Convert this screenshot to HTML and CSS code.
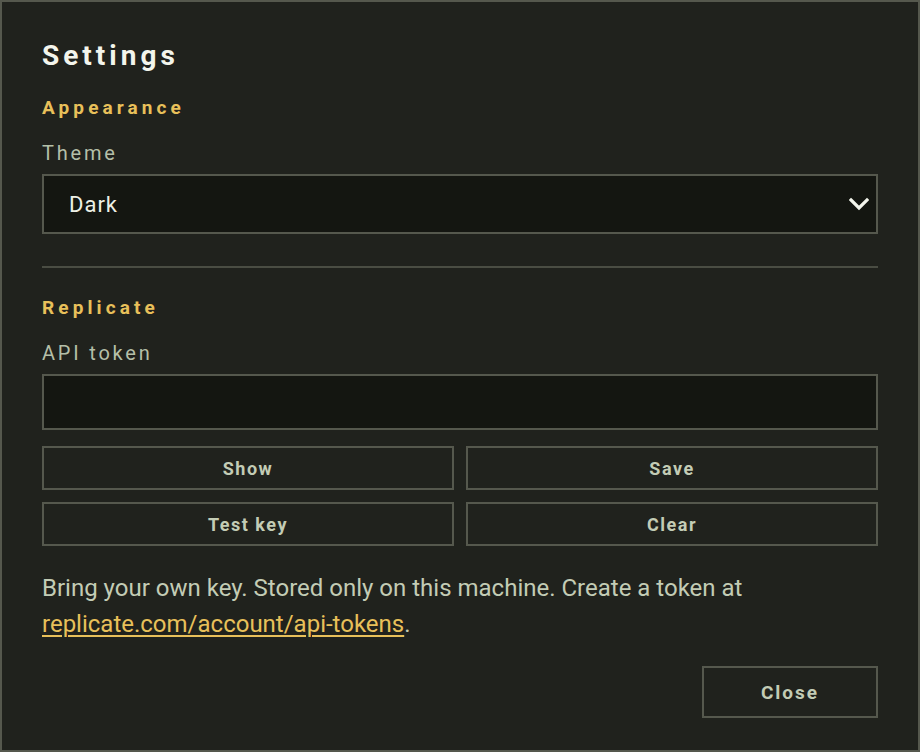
FILE: index.html
```html
<!DOCTYPE html>
<html>
<head>
<meta charset="utf-8">
<link rel="stylesheet" href="styles.css">
</head>
<body>
<div class="dialog">
  <h1 class="title">Settings</h1>
  <h2 class="section">Appearance</h2>
  <div class="label">Theme</div>
  <div class="select">
    <span class="select-value">Dark</span>
    <svg class="chevron" width="20" height="14" viewBox="0 0 20 14"><path d="M2 3 L10 11 L18 3" fill="none" stroke="#f3f5ec" stroke-width="3.2" stroke-linecap="square"/></svg>
  </div>
  <div class="divider"></div>
  <h2 class="section">Replicate</h2>
  <div class="label">API token</div>
  <div class="input"></div>
  <div class="btn-grid">
    <button class="btn">Show</button>
    <button class="btn">Save</button>
    <button class="btn">Test key</button>
    <button class="btn">Clear</button>
  </div>
  <p class="help">Bring your own key. Stored only on this machine. Create a token at <a class="link" href="#">replicate.com/account/api-tokens</a>.</p>
  <div class="footer">
    <button class="btn close">Close</button>
  </div>
</div>
</body>
</html>
```

FILE: styles.css
```css
html, body {
  margin: 0;
  padding: 0;
  background: #20221d;
}
.dialog {
  box-sizing: border-box;
  width: 920px;
  height: 752px;
  border: 2px solid #55584d;
  background: #20221d;
  padding: 38px 40px 0 40px;
  font-family: Roboto, "Liberation Sans", sans-serif;
  color: #c3ccb5;
}
.title {
  margin: 0;
  font-size: 28px;
  line-height: 32px;
  font-weight: 700;
  letter-spacing: 4px;
  color: #f3f5ec;
}
.section {
  margin: 24px 0 0 0;
  font-size: 19px;
  line-height: 24px;
  font-weight: 700;
  letter-spacing: 4.1px;
  color: #e8c05a;
}
.label {
  margin-top: 21px;
  font-size: 20px;
  line-height: 24px;
  letter-spacing: 2.8px;
  color: #b4bfa8;
}
.select {
  box-sizing: border-box;
  margin-top: 9px;
  height: 60px;
  border: 2px solid #55584d;
  background: #141611;
  display: flex;
  align-items: center;
  justify-content: space-between;
  padding: 0 7px 0 25px;
}
.select-value {
  font-size: 22px;
  letter-spacing: 1px;
  color: #eef0e6;
}
.chevron {
  display: block;
}
.divider {
  margin-top: 32px;
  border-top: 2px solid #4a4d43;
}
.divider + .section {
  margin-top: 28px;
}
.input {
  box-sizing: border-box;
  margin-top: 9px;
  height: 56px;
  border: 2px solid #55584d;
  background: #141611;
}
.btn-grid {
  margin-top: 16px;
  display: grid;
  grid-template-columns: 1fr 1fr;
  grid-auto-rows: 44px;
  gap: 12px;
}
.btn {
  box-sizing: border-box;
  margin: 0;
  border: 2px solid #55584d;
  background: #20221d;
  color: #c3ccb5;
  font-family: Roboto, "Liberation Sans", sans-serif;
  font-size: 18px;
  font-weight: 700;
  letter-spacing: 1.5px;
  padding: 0;
}
.help {
  margin: 24px 0 0 0;
  font-size: 24px;
  line-height: 36px;
  color: #c3ccb5;
}
.link {
  color: #e8c05a;
  text-decoration: underline;
  text-decoration-thickness: 2px;
  text-underline-offset: 3px;
}
.footer {
  margin-top: 24px;
  display: flex;
  justify-content: flex-end;
}
.close {
  width: 176px;
  height: 52px;
  font-size: 19px;
  letter-spacing: 2px;
}
```
